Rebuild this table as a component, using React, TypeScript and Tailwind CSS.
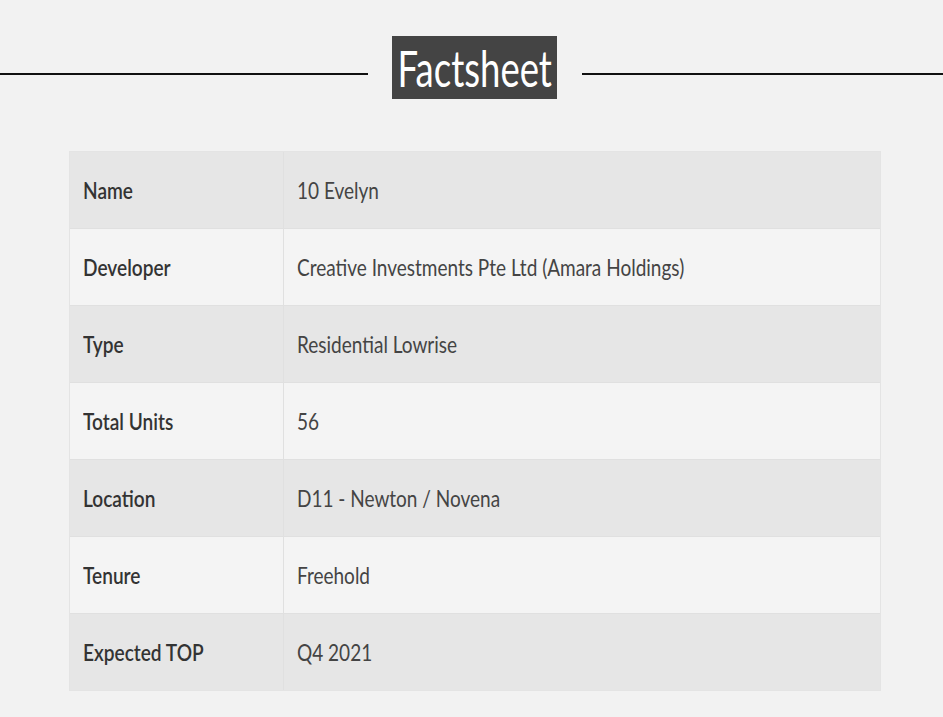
import React from 'react'

const rows = [
  { label: 'Name', value: '10 Evelyn' },
  { label: 'Developer', value: 'Creative Investments Pte Ltd (Amara Holdings)' },
  { label: 'Type', value: 'Residential Lowrise' },
  { label: 'Total Units', value: '56' },
  { label: 'Location', value: 'D11 - Newton / Novena' },
  { label: 'Tenure', value: 'Freehold' },
  { label: 'Expected TOP', value: 'Q4 2021' },
]

export default function App() {
  return (
    <div className="min-h-[717px] w-full bg-[#f2f2f2] pt-[36px] font-['Lato',sans-serif]">
      {/* heading with rules */}
      <div className="flex items-start">
        <div className="mt-[37px] h-[2px] w-[368px] bg-[#111]" />
        <div className="ml-[24px] mr-[25px] flex h-[63px] w-[165px] items-center justify-center bg-[#444]">
          <span className="inline-block scale-x-[0.73] text-[50px] leading-none text-white">
            Factsheet
          </span>
        </div>
        <div className="mt-[37px] h-[2px] flex-1 bg-[#111]" />
      </div>

      {/* table */}
      <div className="ml-[69px] mt-[52px] w-[812px] border border-[#e4e4e4]">
        {rows.map((row, i) => (
          <div
            key={row.label}
            className={
              'flex items-center ' +
              (i % 2 === 0 ? 'bg-[#e6e6e6]' : 'bg-[#f4f4f4]') +
              (i > 0 ? ' h-[77px] border-t border-[#e0e0e0]' : ' h-[76px]')
            }
          >
            <div className="flex h-full w-[214px] items-center border-r border-[#e0e0e0] pl-[13px]">
              <span className="inline-block origin-left scale-x-[0.83] whitespace-nowrap text-[23px] font-semibold text-[#333]">
                {row.label}
              </span>
            </div>
            <div className="flex h-full flex-1 items-center pl-[13px]">
              <span className="inline-block origin-left scale-x-[0.826] whitespace-nowrap text-[23px] text-[#444]">
                {row.value}
              </span>
            </div>
          </div>
        ))}
      </div>
    </div>
  )
}
